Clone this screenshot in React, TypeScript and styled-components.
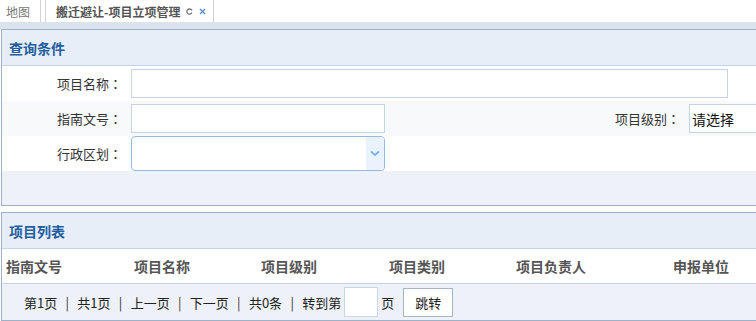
import React from "react";
import styled, { createGlobalStyle } from "styled-components";

const GlobalStyle = createGlobalStyle`
  html, body { margin: 0; padding: 0; background: #ffffff; overflow: hidden; }
  body { font-family: "Noto Sans CJK SC", "Liberation Sans", sans-serif; color: #333; }
  * { box-sizing: border-box; }
`;

const Page = styled.div`
  width: 756px;
  height: 321px;
  overflow: hidden;
`;

const TabBar = styled.div`
  display: flex;
  height: 22px;
  background: #fff;
`;

const Tab = styled.div<{ $active?: boolean }>`
  display: flex;
  align-items: center;
  height: 22px;
  font-size: 12px;
  color: ${(p) => (p.$active ? "#555" : "#777")};
  font-weight: ${(p) => (p.$active ? 600 : 400)};
  padding: ${(p) => (p.$active ? "0 7px 0 10px" : "0 10px 0 6px")};
  margin-left: ${(p) => (p.$active ? "4px" : "0")};
  border-right: 1px solid #d4d4d4;
  border-left: ${(p) => (p.$active ? "1px solid #d4d4d4" : "none")};
  white-space: nowrap;
`;

const TabIcons = styled.span`
  display: inline-flex;
  align-items: center;
  gap: 6px;
  margin-left: 6px;
`;

const Strip = styled.div`
  height: 7px;
  background: #dae3ee;
`;

const Content = styled.div`
  padding-left: 1px;
  display: flex;
  flex-direction: column;
  gap: 6px;
`;

const Panel = styled.div`
  width: 900px;
  border: 1px solid #9db2c9;
  border-right: none;
  background: #eef2f8;
`;

const PanelHeader = styled.div`
  height: 36px;
  display: flex;
  align-items: center;
  padding-left: 7px;
  background: #e8eef8;
  border-bottom: 1px solid #c4d4e6;
  font-size: 14px;
  font-weight: 700;
  color: #1f5e9e;
`;

const FormRow = styled.div<{ $alt?: boolean }>`
  display: grid;
  grid-template-columns: 120px 420px 120px 1fr;
  column-gap: 9px;
  align-items: center;
  height: 35px;
  background: ${(p) => (p.$alt ? "#f7f9fb" : "#ffffff")};
`;

const Label = styled.label`
  text-align: right;
  font-size: 13px;
  color: #333;
  white-space: nowrap;
`;

const Colon = styled.span`
  font-family: "Noto Sans CJK TC", "Noto Sans CJK SC", sans-serif;
`;

const TextInput = styled.div<{ $w: number; $span?: boolean }>`
  width: ${(p) => p.$w}px;
  height: 29px;
  border: 1px solid #c5d5e8;
  background: #fff;
  grid-column: ${(p) => (p.$span ? "2 / -1" : "auto")};
  font-size: 14px;
  color: #111;
  display: flex;
  align-items: center;
  padding-left: 2px;
`;

const Select = styled.div`
  width: 254px;
  height: 35px;
  border: 1px solid #93b9e6;
  border-radius: 4px;
  background: #fff;
  display: flex;
  justify-content: flex-end;
  overflow: hidden;
`;

const SelectArrow = styled.div`
  width: 18px;
  height: 100%;
  background: #eaf2fd;
  display: flex;
  align-items: center;
  justify-content: center;
`;

const Filler = styled.div`
  height: 34px;
  background: #eef2f8;
`;

const Columns = styled.div`
  display: grid;
  grid-template-columns: 128px 127px 128px 127px 157px 1fr;
  height: 35px;
  align-items: center;
  background: #fff;
  border-bottom: 1px solid #c4d4e6;
`;

const ColHead = styled.div`
  padding-left: 4px;
  font-size: 14px;
  font-weight: 700;
  color: #555;
  white-space: nowrap;
`;

const Pager = styled.div`
  display: flex;
  align-items: center;
  height: 36px;
  padding-left: 22px;
  font-size: 13px;
  color: #222;
  background: #eef2f8;
`;

const Sep = styled.span`
  margin: 0 8.3px;
  color: #333;
`;

const PageInput = styled.div`
  width: 34px;
  height: 30px;
  margin: 0 3px 0 3px;
  border: 1px solid #c9d6e6;
  background: #fff;
`;

const JumpButton = styled.button`
  margin-left: 9px;
  width: 50px;
  height: 29px;
  border: 1px solid #a3b5c9;
  background: #fff;
  font-family: inherit;
  font-size: 13px;
  color: #222;
  padding: 0;
`;

const columns = ["指南文号", "项目名称", "项目级别", "项目类别", "项目负责人", "申报单位"];

export default function App() {
  return (
    <Page>
      <GlobalStyle />
      <TabBar>
        <Tab>地图</Tab>
        <Tab $active>
          搬迁避让-项目立项管理
          <TabIcons>
            <svg width="7" height="7" viewBox="0 0 7 7">
              <path d="M5.6 2.2 A2.6 2.6 0 1 0 5.8 4.6" fill="none" stroke="#777" strokeWidth="1.3" />
              <path d="M4.4 1 L6.4 1.2 L6 3.1 Z" fill="#777" />
            </svg>
            <svg width="7" height="7" viewBox="0 0 7 7">
              <path d="M1 1 L6 6 M6 1 L1 6" stroke="#5b8fd6" strokeWidth="1.4" />
            </svg>
          </TabIcons>
        </Tab>
      </TabBar>
      <Strip />
      <Content>
        <Panel>
          <PanelHeader>查询条件</PanelHeader>
          <FormRow>
            <Label>项目名称<Colon>：</Colon></Label>
            <TextInput $w={597} $span />
          </FormRow>
          <FormRow $alt>
            <Label>指南文号<Colon>：</Colon></Label>
            <TextInput $w={254} />
            <Label>项目级别<Colon>：</Colon></Label>
            <TextInput $w={150}>请选择</TextInput>
          </FormRow>
          <FormRow>
            <Label>行政区划<Colon>：</Colon></Label>
            <Select>
              <SelectArrow>
                <svg width="10" height="7" viewBox="0 0 10 7">
                  <path d="M1 1.5 L5 5 L9 1.5" fill="none" stroke="#78b6ea" strokeWidth="1.8" />
                </svg>
              </SelectArrow>
            </Select>
          </FormRow>
          <Filler />
        </Panel>
        <Panel>
          <PanelHeader>项目列表</PanelHeader>
          <Columns>
            {columns.map((c) => (
              <ColHead key={c}>{c}</ColHead>
            ))}
          </Columns>
          <Pager>
            第1页<Sep>|</Sep>共1页<Sep>|</Sep>上一页<Sep>|</Sep>下一页<Sep>|</Sep>共0条<Sep>|</Sep>转到第
            <PageInput />
            页
            <JumpButton>跳转</JumpButton>
          </Pager>
        </Panel>
      </Content>
    </Page>
  );
}
